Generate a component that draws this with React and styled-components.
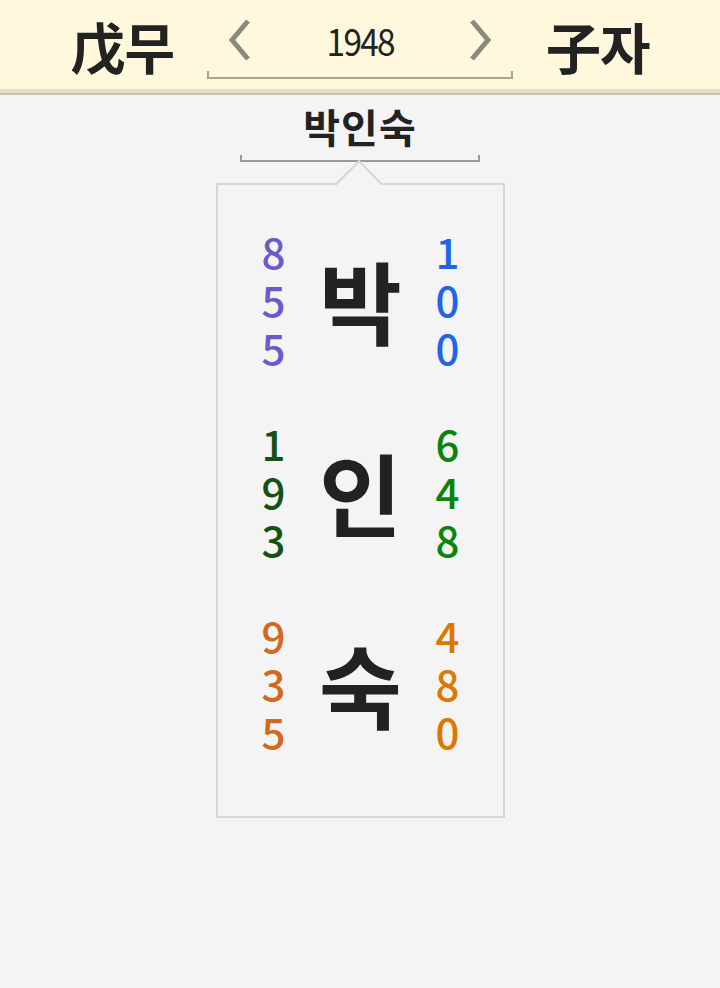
import React from "react";
import styled, { createGlobalStyle } from "styled-components";

const GlobalStyle = createGlobalStyle`
  html, body {
    margin: 0;
    padding: 0;
    background: #f4f4f4;
    font-family: "Noto Sans CJK KR", "Noto Sans", sans-serif;
    color: #222;
  }
`;

const Page = styled.div`
  width: 720px;
  min-height: 988px;
  background: #f4f4f4;
`;

const Header = styled.header`
  height: 89px;
  background: #fff8dc;
  border-bottom: 4px solid #e6dec4;
  box-shadow: 0 2px 0 #c9c1a9;
  display: flex;
  align-items: center;
  justify-content: center;
  gap: 33px;
`;

const HeaderTitle = styled.div`
  font-size: 55px;
  font-weight: 700;
  line-height: 1;
  color: #222;
  letter-spacing: -1px;
  margin-top: 2px;
`;

const YearBox = styled.div`
  width: 306px;
  height: 50px;
  margin-top: 18px;
  box-sizing: border-box;
  border: 2px solid #a8a48f;
  border-top: none;
  display: flex;
  align-items: center;
  justify-content: space-between;
  padding: 0 18px;
  position: relative;
  &::before {
    content: "";
    position: absolute;
    left: -2px;
    right: -2px;
    top: 0;
    bottom: 6px;
    background: #fff8dc;
  }
`;

const YearText = styled.div`
  position: relative;
  font-size: 38px;
  line-height: 1;
  color: #222;
  letter-spacing: -2px;
  margin-top: -26px;
  transform: scaleX(0.88);
`;

const ArrowButton = styled.button`
  position: relative;
  background: none;
  border: none;
  padding: 0;
  width: 26px;
  height: 44px;
  margin-top: -26px;
  display: flex;
  align-items: center;
  justify-content: center;
`;

const Chevron = ({ dir }) => (
  <svg width="26" height="44" viewBox="0 0 26 44">
    <polyline
      points={dir === "left" ? "21,3 5,22 21,41" : "5,3 21,22 5,41"}
      fill="none"
      stroke="#8b8a80"
      strokeWidth="5"
    />
  </svg>
);

const NameTitle = styled.div`
  text-align: center;
  font-size: 40px;
  font-weight: 700;
  line-height: 1;
  margin-top: 13px;
  letter-spacing: 1px;
`;

const Bracket = styled.div`
  width: 240px;
  height: 7px;
  margin: 9px auto 0;
  box-sizing: border-box;
  border: 2px solid #9a9a9a;
  border-top: none;
`;

const Card = styled.div`
  position: relative;
  width: 289px;
  height: 635px;
  margin: 21px auto 0;
  box-sizing: border-box;
  border: 2px solid #d6d6d6;
  background: #f4f4f4;
  padding-top: 42px;
  padding-left: 1px;
  &::before {
    content: "";
    position: absolute;
    width: 32px;
    height: 32px;
    left: 50%;
    top: -18px;
    margin-left: -18px;
    background: #f4f4f4;
    border-top: 2px solid #d6d6d6;
    border-left: 2px solid #d6d6d6;
    transform: rotate(45deg);
  }
`;

const Row = styled.div`
  display: flex;
  align-items: center;
  justify-content: center;
  gap: 20px;
  margin-bottom: 48px;
`;

const Digits = styled.div`
  width: 34px;
  display: flex;
  flex-direction: column;
  align-items: center;
  color: ${(p) => p.color};
  font-size: 42px;
  font-weight: 500;
  line-height: 48px;
`;

const Digit = styled.span`
  display: block;
  height: 48px;
`;

const BigChar = styled.div`
  width: 100px;
  text-align: center;
  font-size: 90px;
  font-weight: 700;
  line-height: 1;
  color: #222;
`;

const rows = [
  { ch: "박", left: "855", right: "100", lc: "#6a5acd", rc: "#1f66e5" },
  { ch: "인", left: "193", right: "648", lc: "#145214", rc: "#0a840a" },
  { ch: "숙", left: "935", right: "480", lc: "#d2691e", rc: "#dc7800" },
];

function App() {
  return (
    <Page>
      <GlobalStyle />
      <Header>
        <HeaderTitle>戊무</HeaderTitle>
        <YearBox>
          <ArrowButton>
            <Chevron dir="left" />
          </ArrowButton>
          <YearText>1948</YearText>
          <ArrowButton>
            <Chevron dir="right" />
          </ArrowButton>
        </YearBox>
        <HeaderTitle>子자</HeaderTitle>
      </Header>
      <NameTitle>박인숙</NameTitle>
      <Bracket />
      <Card>
        {rows.map((r) => (
          <Row key={r.ch}>
            <Digits color={r.lc}>
              {r.left.split("").map((d, i) => (
                <Digit key={i}>{d}</Digit>
              ))}
            </Digits>
            <BigChar>{r.ch}</BigChar>
            <Digits color={r.rc}>
              {r.right.split("").map((d, i) => (
                <Digit key={i}>{d}</Digit>
              ))}
            </Digits>
          </Row>
        ))}
      </Card>
    </Page>
  );
}

export default App;
